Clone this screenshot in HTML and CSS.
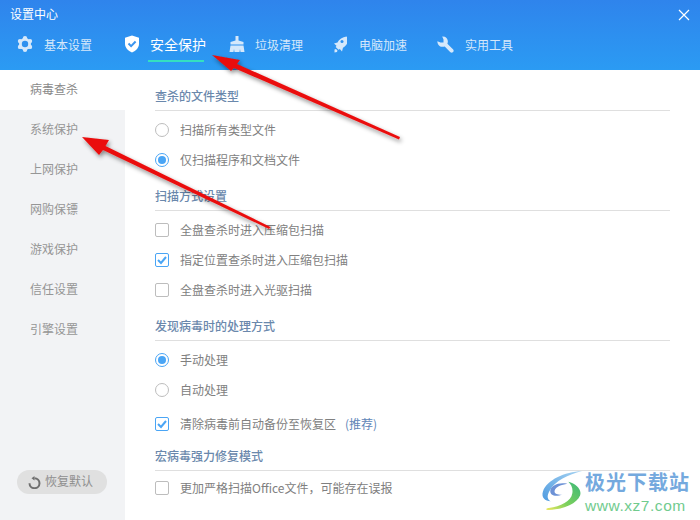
FILE: index.html
```
<!DOCTYPE html>
<html lang="zh">
<head>
<meta charset="utf-8">
<title>设置中心</title>
<link rel="stylesheet" href="styles.css">
</head>
<body>
<div class="app">
  <header class="header">
    <div class="titlebar">
      <span class="title">设置中心</span>
      <svg class="close" width="12" height="12" viewBox="0 0 12 12"><path d="M1 1l10 10M11 1L1 11" stroke="#fff" stroke-width="1.2" fill="none"/></svg>
    </div>
    <nav class="tabs">
      <a class="tab t1"><svg class="tabicon" width="16" height="16" viewBox="0 0 16 16"><g fill="#d5e8fb"><circle cx="8" cy="8" r="6"/><circle cx="8" cy="2.300" r="2.200"/><circle cx="13" cy="5.100" r="2.200"/><circle cx="13" cy="10.900" r="2.200"/><circle cx="8" cy="13.700" r="2.200"/><circle cx="3" cy="10.900" r="2.200"/><circle cx="3" cy="5.100" r="2.200"/></g><circle cx="8" cy="8" r="3.200" fill="#2e90ef"/></svg><span>基本设置</span></a>
      <a class="tab t2 active"><svg class="tabicon" width="16" height="18" viewBox="0 0 16 18"><path fill="#fff" d="M8 .5l7 2.300v6c0 4-3 7-7 8.700-4-1.700-7-4.700-7-8.700v-6z"/><path fill="none" stroke="#3b94ee" stroke-width="2" d="M4.500 8.500l2.600 2.600 4.500-4.600"/></svg><span>安全保护</span></a>
      <a class="tab t3"><svg class="tabicon" width="16" height="16" viewBox="0 0 16 16"><path fill="#d5e8fb" d="M6.500 0h3v4.500l5 1.500v2.500H1.500V6l5-1.500zM1.500 9.500h13l1 6.500h-4l-.5-3-.5 3h-5l-.5-3-.5 3H.5z"/></svg><span>垃圾清理</span></a>
      <a class="tab t4"><svg class="tabicon" width="14" height="17" viewBox="0 0 14 17"><path fill="#d5e8fb" d="M13.500.5c-4 .5-7.500 3-9 6L1 7.500l2.500 2.200-.8 1.300 2.800 2.800 1.300-.8 2.200 2.500 1-3.800c3-1.500 5.500-5 5.500-9.500zM1.500 13.500l1.500-.5 1.500 1.500-.5 1.500-2.500.5z"/><circle cx="9" cy="5.500" r="1.500" fill="#2e90ef"/></svg><span>电脑加速</span></a>
      <a class="tab t5"><svg class="tabicon" width="17" height="17" viewBox="0 0 17 17"><path fill="#d5e8fb" d="M5.200.4a5.200 5.200 0 0 1 5.200 7.300l5.800 5.800a2 2 0 0 1-2.800 2.800l-5.700-5.900A5.200 5.200 0 0 1 .4 5.200l3.100 1.300h3v-3z"/></svg><span>实用工具</span></a>
    </nav>
  </header>
  <div class="body">
    <aside class="side">
      <ul class="menu">
        <li class="item current">病毒查杀</li>
        <li class="item">系统保护</li>
        <li class="item">上网保护</li>
        <li class="item">网购保镖</li>
        <li class="item">游戏保护</li>
        <li class="item">信任设置</li>
        <li class="item">引擎设置</li>
      </ul>
      <button class="reset"><svg width="13" height="13" viewBox="0 0 13 13"><path fill="none" stroke="#6f6f6f" stroke-width="2" d="M6.500 2.200a5 5 0 1 1-5 5"/><path fill="#6f6f6f" d="M6.500 0v4.500L3.500 2.200z"/></svg><span>恢复默认</span></button>
    </aside>
    <main class="content">
      <section class="group g1">
        <h2 class="heading">查杀的文件类型</h2>
        <div class="row"><i class="radio"></i><span>扫描所有类型文件</span></div>
        <div class="row"><i class="radio on"></i><span>仅扫描程序和文档文件</span></div>
      </section>
      <section class="group g2">
        <h2 class="heading">扫描方式设置</h2>
        <div class="row"><i class="check"></i><span>全盘查杀时进入压缩包扫描</span></div>
        <div class="row"><i class="check on"><svg width="12" height="12" viewBox="0 0 12 12"><path fill="none" stroke="#4aa5f5" stroke-width="2" d="M2 6l3 3 5-6"/></svg></i><span>指定位置查杀时进入压缩包扫描</span></div>
        <div class="row"><i class="check"></i><span>全盘查杀时进入光驱扫描</span></div>
      </section>
      <section class="group g3">
        <h2 class="heading">发现病毒时的处理方式</h2>
        <div class="row"><i class="radio on"></i><span>手动处理</span></div>
        <div class="row"><i class="radio"></i><span>自动处理</span></div>
        <div class="row backup"><i class="check on"><svg width="12" height="12" viewBox="0 0 12 12"><path fill="none" stroke="#4aa5f5" stroke-width="2" d="M2 6l3 3 5-6"/></svg></i><span>清除病毒前自动备份至恢复区</span><span class="rec">(推荐)</span></div>
      </section>
      <section class="group g4">
        <h2 class="heading">宏病毒强力修复模式</h2>
        <div class="row"><i class="check"></i><span>更加严格扫描Office文件，可能存在误报</span></div>
      </section>
    </main>
  </div>

  <svg class="arrows" width="700" height="520" viewBox="0 0 700 520">
    <defs><filter id="sh" x="-10%" y="-10%" width="120%" height="120%"><feDropShadow dx="1.500" dy="2.500" stdDeviation="2" flood-color="#000" flood-opacity=".45"/></filter></defs>
    <g filter="url(#sh)" fill="#ea0f0f">
      <path d="M212 55l28 5-3 4 163 73-1 2.500-165-71.500-3 3z"/>
      <path d="M82 137l27 3-3.500 6 165 81-1.500 2-166-79-4 5z"/>
    </g>
  </svg>

  <div class="brand">
    <svg class="logo" width="43" height="42" viewBox="0 0 44 43">
      <defs>
        <linearGradient id="gb" x1="1" y1="0" x2="0" y2="1"><stop offset="0" stop-color="#a8d4f2"/><stop offset="1" stop-color="#4f9be0"/></linearGradient>
        <linearGradient id="gg" x1="1" y1="0" x2="0" y2="1"><stop offset="0" stop-color="#3cb878"/><stop offset=".6" stop-color="#7cd05c"/><stop offset="1" stop-color="#f0e860"/></linearGradient>
      </defs>
      <path fill="url(#gb)" d="M42 1C24 2 6 10 2 22c-2 6 2 10 8 10-4-2-4-6-1-11C14 11 28 5 42 1z"/>
      <path fill="#6d92d6" d="M27 14c-9-2-17 2-17.500 7-.5 5 5.500 7 12.500 4-5 1-9-1-8-4 1-4 7-6 13-7z"/>
      <path fill="url(#gg)" d="M28 12c8 2 14 8 12 14-3 8-16 14-32 15-5 0-2-2 0-2 12-2 23-7 24-15 1-5-1-9-4-12z"/>
    </svg>
    <div class="brandtext">
      <div class="bname">极光下载站</div>
      <div class="burl">www.xz7.com</div>
    </div>
  </div>
</div>
</body>
</html>
```
FILE: styles.css
```
* { box-sizing: border-box; }
html, body { margin: 0; padding: 0; }
body { width: 700px; height: 520px; overflow: hidden; background: #fff; font-family: "Noto Sans CJK SC", "Liberation Sans", sans-serif; }
.app { position: relative; width: 700px; height: 520px; display: flex; flex-direction: column; }
.header { height: 70px; background: linear-gradient(#2f84ec, #2b9bf3); color: #fff; display: flex; flex-direction: column; flex: none; }
.titlebar { height: 28px; display: flex; align-items: center; justify-content: space-between; padding: 0 10px 0 10px; }
.title { font-size: 12px; line-height: 16px; }
.close { display: block; margin-top: 2px; }
.tabs { display: flex; height: 42px; position: relative; }
.tab { display: flex; align-items: center; flex: none; height: 34px; padding-bottom: 2px; color: #d5e8fb; font-size: 12px; white-space: nowrap; }
.tabicon { flex: none; display: block; }
.t1 { margin-left: 17px; width: 107px; }
.t1 .tabicon { margin-right: 11px; }
.t2 { width: 105px; }
.t2 .tabicon { margin-right: 10px; }
.t3 { width: 104px; }
.t3 .tabicon { margin-right: 10px; }
.t4 { width: 104px; }
.t4 .tabicon { margin-right: 12px; }
.t5 .tabicon { margin-right: 11px; }
.active { color: #fff; font-size: 14px; position: relative; }
.active::after { content: ""; position: absolute; left: 24px; top: 32px; width: 56px; height: 2px; background: #34e0c0; }
.body { flex: 1; display: flex; min-height: 0; }
.side { width: 125px; flex: none; background: #f2f3f5; position: relative; display: flex; flex-direction: column; }
.menu { list-style: none; margin: 0; padding: 0; }
.item { height: 40px; line-height: 38px; padding-left: 30px; font-size: 12px; color: #969696; }
.item.current { background: #fff; color: #8a8a8a; }
.reset { position: absolute; left: 17px; top: 400px; width: 90px; height: 24px; border: 0; border-radius: 12px; background: #e0e0e0; color: #8f8f8f; font: inherit; font-size: 12px; line-height: 22px; display: flex; align-items: center; gap: 4px; padding: 0 0 0 11px; }
.reset span { margin-top: -2px; }
.content { flex: 1; padding: 0 30px; min-width: 0; }
.group { display: block; }
.heading { margin: 0 0 4px; height: 31px; border-bottom: 1px solid #dfdfdf; font-size: 12px; font-weight: 500; line-height: 32px; color: #6a88ac; }
.g1 { padding-top: 10px; }
.g2 { padding-top: 5px; }
.g3 { padding-top: 5px; }
.g4 { padding-top: 1px; }
.g4 .heading { margin-bottom: 2px; }
.row { height: 30px; display: flex; align-items: center; font-size: 12px; color: #808080; }
.row span { margin-top: -2px; }
.backup { margin-top: 4px; }
.radio { width: 14px; height: 14px; margin: 0 11px 0 0; border: 1px solid #bdbdbd; border-radius: 50%; background: #fff; flex: none; display: block; position: relative; }
.radio.on { border-color: #4aa5f5; }
.radio.on::after { content: ""; position: absolute; left: 2px; top: 2px; width: 8px; height: 8px; border-radius: 50%; background: #4aa5f5; }
.check { width: 14px; height: 14px; margin: 0 11px 0 0; border: 1px solid #bdbdbd; border-radius: 2px; background: #fff; flex: none; display: flex; align-items: center; justify-content: center; }
.check.on { border-color: #4aa5f5; }
.rec { margin-left: 9px; color: #5f86b8; font-size: 12px; }
.arrows { position: absolute; left: 0; top: 0; pointer-events: none; }
.brand { position: absolute; left: 541px; top: 469px; display: flex; align-items: flex-start; }
.logo { display: block; margin-top: 1px; flex: none; }
.brandtext { margin-left: 1px; }
.bname { font-size: 20px; line-height: 26px; font-weight: 700; color: #74a9de; letter-spacing: 1px; }
.burl { margin-top: 3px; font-family: "Liberation Sans", sans-serif; font-size: 15.500px; line-height: 16px; color: #71cb8e; letter-spacing: .55px; }
```
